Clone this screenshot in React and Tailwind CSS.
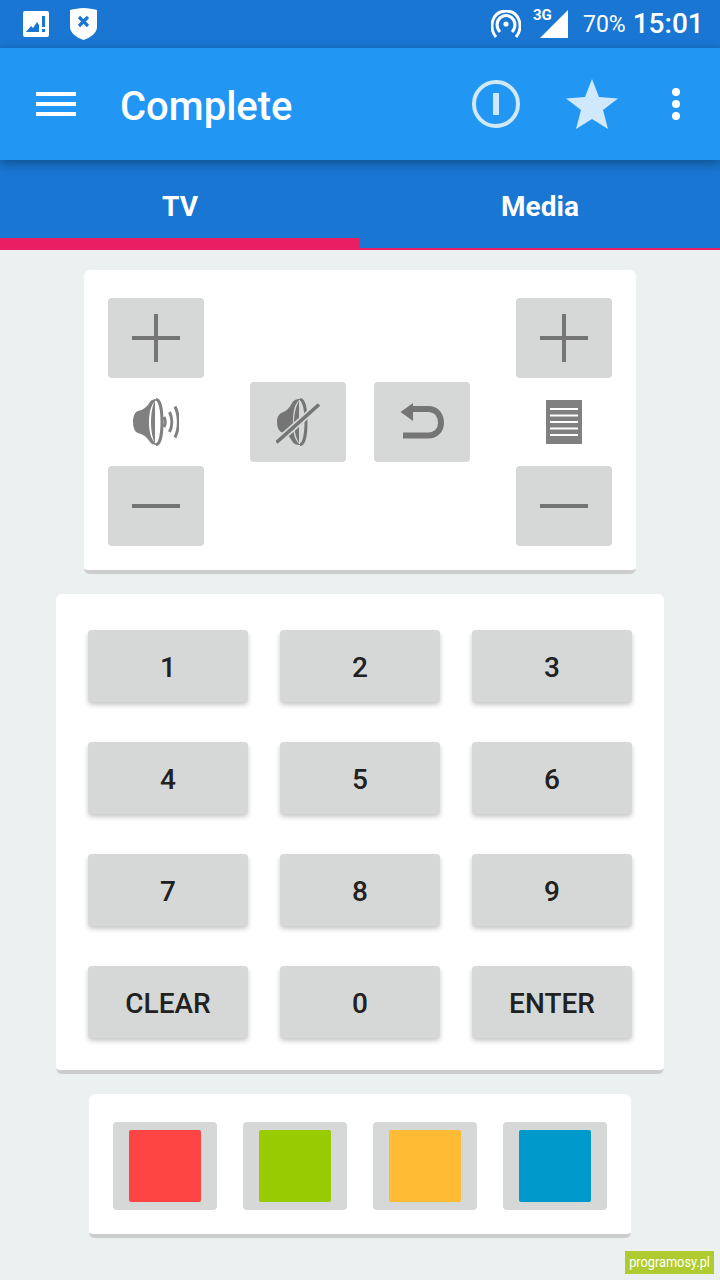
import React from 'react';

const Plus = () => (
  <svg width="48" height="48" viewBox="0 0 48 48" fill="#757575">
    <rect x="0" y="22" width="48" height="4" />
    <rect x="22" y="0" width="4" height="48" />
  </svg>
);

const Minus = () => (
  <svg width="48" height="4" viewBox="0 0 48 4" fill="#757575">
    <rect width="48" height="4" />
  </svg>
);

const Speaker = () => (
  <svg width="46" height="48" viewBox="0 0 46 48" fill="none">
    <path d="M5 13C2 14 0 18 0 24C0 30 2 34 5 35C10 36 14 39 17 44C19 47 22 47 25 47C19 44 16 36 16 24C16 12 19 4 25 1C22 1 19 1 17 4C14 9 10 12 5 13Z" fill="#808080" />
    <path d="M23 1.5C27 1.5 29 12 29 24C29 36 27 46.5 23 46.5" stroke="#808080" strokeWidth="3" />
    <path d="M18 24C18 14 20 6 22 3V45C20 42 18 34 18 24Z" fill="#808080" />
    <path d="M31 19C32.5 22 32.5 26 31 29" stroke="#808080" strokeWidth="3" />
    <path d="M36.5 14C39.5 20 39.5 28 36.5 34" stroke="#808080" strokeWidth="3" />
    <path d="M42 8.5C46.5 18 46.5 30 42 39.5" stroke="#808080" strokeWidth="3" />
  </svg>
);

const Mute = () => (
  <svg width="44" height="48" viewBox="0 0 44 48" fill="none">
    <path d="M5 15C2 17 1 20 1 24C1 28 2 32 5 34C9 35 13 37 16 43C18 47 22 47 25 47C19 44 17 36 17 24C17 12 19 4 25 1C22 1 18 1 16 5C13 11 9 14 5 15Z" fill="#757575" />
    <path d="M18 24C18 14 21 6 23 3V45C21 42 18 34 18 24Z" fill="#757575" />
    <path d="M24 1.5C28 1.5 30 12 30 24C30 36 28 46.5 24 46.5" stroke="#757575" strokeWidth="3" />
    <path d="M0.5 44.5L43 6.5" stroke="#d6d8d8" strokeWidth="7" />
    <path d="M0.5 44.5L43 6.5" stroke="#757575" strokeWidth="3.6" />
  </svg>
);

const Back = () => (
  <svg width="44" height="38" viewBox="0 0 44 38" fill="#757575">
    <path d="M0.5 9L13 0V18Z" />
    <path d="M12 6H28C38 6 41 14 41 20C41 27 36 32.5 28 32.5H3" fill="none" stroke="#757575" strokeWidth="6" />
  </svg>
);

const ListIcon = () => (
  <svg width="36" height="44" viewBox="0 0 36 44">
    <rect width="36" height="44" fill="#808080" />
    <g fill="#ffffff">
      <rect x="4" y="8" width="28" height="2" />
      <rect x="4" y="14.5" width="28" height="2" />
      <rect x="4" y="21" width="28" height="2" />
      <rect x="4" y="27.5" width="28" height="2" />
      <rect x="4" y="34" width="28" height="2" />
    </g>
  </svg>
);

const GrayButton = ({ children }) => (
  <button className="w-24 h-20 bg-[#d6d8d8] rounded-[4px] flex items-center justify-center">
    {children}
  </button>
);

const keys = ['1', '2', '3', '4', '5', '6', '7', '8', '9', 'CLEAR', '0', 'ENTER'];
const colors = ['bg-[#ff4444]', 'bg-[#99cc00]', 'bg-[#ffbb33]', 'bg-[#0099cc]'];

const App = () => {
  return (
    <div className="w-[720px] h-[1280px] overflow-hidden bg-[#ecf0f1] font-['Roboto',sans-serif] flex flex-col">
      {/* Status bar */}
      <div className="h-12 shrink-0 bg-[#1976d2] flex items-center text-white">
        <svg className="ml-[23px]" width="26" height="26" viewBox="0 0 26 26">
          <rect width="26" height="26" rx="2" fill="#ffffff" />
          <path d="M3 21L8 15L10 17L14 11L16 14V21Z" fill="#1976d2" />
          <rect x="19" y="5" width="3" height="11" fill="#1976d2" />
          <rect x="19" y="18" width="3" height="3" fill="#1976d2" />
        </svg>
        <svg className="ml-[21px] -mt-[1px]" width="27" height="32" viewBox="0 0 27 32">
          <path d="M13.5 0C18 0 23 1 27 2V19C27 25 20 30 13.5 32C7 30 0 25 0 19V2C4 1 9 0 13.5 0Z" fill="#ffffff" />
          <path d="M9 9L18 18M18 9L9 18" stroke="#1976d2" strokeWidth="3.2" />
        </svg>
        <svg className="ml-[394px]" width="30" height="28" viewBox="0 0 30 28" fill="none" stroke="#ffffff" strokeWidth="3">
          <circle cx="15" cy="14" r="2.6" fill="#ffffff" stroke="none" />
          <path d="M9 22C5 18 5 11 9.5 7.5C13 5 17 5 20.5 7.5C25 11 25 18 21 22" />
          <path d="M5 27C-1 20 0 9 6 4C11 0 19 0 24 4C30 9 31 20 25 27" />
        </svg>
        <div className="relative w-[37px] h-7 ml-[10px]">
          <svg className="absolute right-0 top-0" width="28" height="28" viewBox="0 0 28 28">
            <path d="M0 28L28 0V28Z" fill="#ffffff" />
          </svg>
          <span className="absolute left-[2px] -top-[3px] text-[15px] leading-[17px] font-bold">3G</span>
        </div>
        <span className="ml-[15px] text-[23px] leading-none">70%</span>
        <span className="ml-[7px] text-[28px] leading-none font-medium">15:01</span>
      </div>

      {/* App bar */}
      <div className="relative z-10 h-28 shrink-0 bg-[#2196f3] flex items-center shadow-[0_3px_10px_rgba(0,0,0,0.35)]">
        <div className="ml-9 w-10 flex flex-col gap-1.5">
          <div className="h-1 bg-white" />
          <div className="h-1 bg-white" />
          <div className="h-1 bg-white" />
        </div>
        <h1 className="ml-[44px] mt-1.5 text-[40px] leading-[60px] font-medium text-white">Complete</h1>
        <svg className="ml-[179px]" width="48" height="48" viewBox="0 0 48 48">
          <circle cx="24" cy="24" r="22" fill="none" stroke="#cfe8fc" strokeWidth="4" />
          <rect x="21" y="13" width="6" height="22" fill="#cfe8fc" />
        </svg>
        <svg className="ml-[46px]" width="52" height="50" viewBox="0 0 52 50">
          <path d="M26 0L33 18L52 19.5L37 31L42 50L26 40L10 50L15 31L0 19.5L19 18Z" fill="#cfe8fc" />
        </svg>
        <div className="ml-[54px] flex flex-col gap-1">
          <div className="w-2 h-2 rounded-full bg-white" />
          <div className="w-2 h-2 rounded-full bg-white" />
          <div className="w-2 h-2 rounded-full bg-white" />
        </div>
      </div>

      {/* Tabs */}
      <div className="h-[90px] shrink-0 flex bg-[#1976d2] text-white text-[28px] font-bold">
        <div className="w-1/2 border-b-[12px] border-[#e91e63] flex items-center justify-center pt-[16px]">TV</div>
        <div className="w-1/2 border-b-2 border-[#e91e63] flex items-center justify-center pt-1.5">Media</div>
      </div>

      <main className="flex flex-col items-center pt-5">
        {/* Volume / channel */}
        <div className="w-[552px] bg-white rounded-[6px] border-b-4 border-[#cccccc] pt-7 pb-6 px-6 flex justify-between items-center">
          <div className="flex flex-col items-center">
            <GrayButton><Plus /></GrayButton>
            <div className="h-[88px] flex items-center justify-center"><Speaker /></div>
            <GrayButton><Minus /></GrayButton>
          </div>
          <div className="flex gap-7">
            <GrayButton><Mute /></GrayButton>
            <GrayButton><Back /></GrayButton>
          </div>
          <div className="flex flex-col items-center">
            <GrayButton><Plus /></GrayButton>
            <div className="h-[88px] flex items-center justify-center"><ListIcon /></div>
            <GrayButton><Minus /></GrayButton>
          </div>
        </div>

        {/* Number pad */}
        <div className="mt-5 w-[608px] bg-white rounded-[6px] border-b-4 border-[#cccccc] pt-9 pb-8 px-8 grid grid-cols-3 gap-x-8 gap-y-10">
          {keys.map((k) => (
            <button
              key={k}
              className="h-[72px] bg-[#d6d8d8] rounded-[4px] shadow-[0_3px_5px_rgba(0,0,0,0.22)] text-[28px] font-medium text-[#212121] flex items-center justify-center pt-1"
            >
              {k}
            </button>
          ))}
        </div>

        {/* Colour keys */}
        <div className="mt-5 w-[542px] bg-white rounded-[6px] border-b-4 border-[#cccccc] pt-7 pb-6 px-6 flex justify-between">
          {colors.map((c) => (
            <button key={c} className="w-[104px] h-[88px] bg-[#d6d8d8] rounded-[4px] flex items-center justify-center">
              <div className={`w-[72px] h-[72px] rounded-[2px] ${c}`} />
            </button>
          ))}
        </div>

        {/* Watermark */}
        <div className="self-end mr-[6px] mt-[13px] w-[89px] h-[23px] bg-[#b0cb2f] text-white text-[15px] flex items-center justify-center">
          <span className="scale-x-[0.85] whitespace-nowrap">programosy.pl</span>
        </div>
      </main>
    </div>
  );
};

export default App;
